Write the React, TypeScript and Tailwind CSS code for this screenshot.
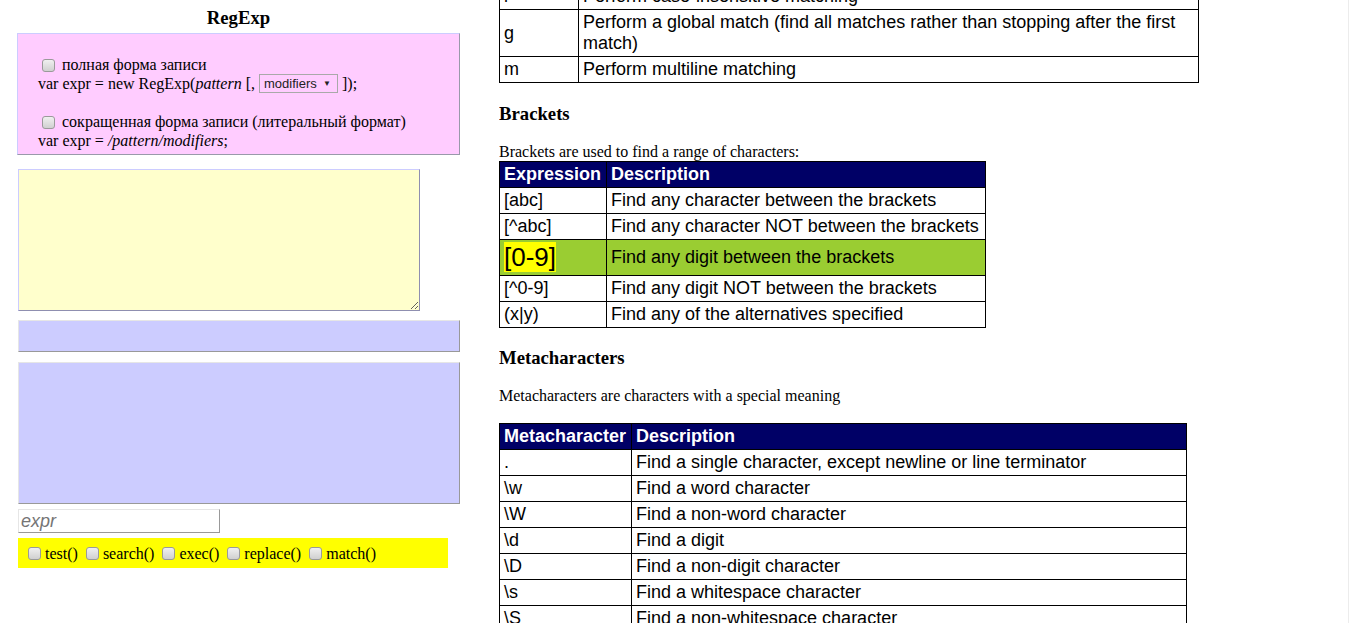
import React from "react";

const cell = "border border-black px-[4px] py-[2px] leading-[21px] align-middle text-left font-normal";
const head = "border border-black px-[4px] py-[2px] leading-[21px] align-middle text-left bg-[#000066] text-white font-bold";

function Box() {
  return (
    <input
      type="checkbox"
      className="appearance-none inline-block w-[13px] h-[13px] rounded-[3px] border border-[#9a9a9a] bg-gradient-to-b from-[#f0f0f0] to-[#d0d0d0] align-[-2px] shrink-0"
    />
  );
}

const meta: [string, string][] = [
  [".", "Find a single character, except newline or line terminator"],
  ["\\w", "Find a word character"],
  ["\\W", "Find a non-word character"],
  ["\\d", "Find a digit"],
  ["\\D", "Find a non-digit character"],
  ["\\s", "Find a whitespace character"],
  ["\\S", "Find a non-whitespace character"],
  ["\\b", "Find a match at the beginning/end of a word"],
  ["\\B", "Find a match not at the beginning/end of a word"],
];

export default function App() {
  return (
    <div className="w-[1349px] h-[623px] overflow-hidden bg-white flex text-black text-[16px] font-['Liberation_Serif',serif] border-r border-[#ececec]">
      {/* left column */}
      <div className="w-[499px] shrink-0 pl-[17px]">
        <h1 className="w-[443px] h-[33px] pt-[7px] text-center font-bold text-[18.72px] leading-[22px]">RegExp</h1>
        <div className="w-[443px] h-[122px] bg-[#ffccff] border border-t-[#ccccff] border-l-[#ccccff] border-b-[#9999aa] border-r-[#9999aa] pl-[20px] pt-[21px] leading-[19px]">
          <div className="h-[19px]">
            <span className="ml-[4px] mr-[7px]"><Box /></span>
            полная форма записи
          </div>
          <div className="h-[19px] flex items-center whitespace-pre">
            <span>var expr = new RegExp(</span>
            <i>pattern</i>
            <span> [, </span>
            <span className="inline-flex items-center justify-between w-[79px] h-[19px] border border-[#a9a9a9] pl-[4px] pr-[6px] font-['Liberation_Sans',sans-serif] text-[13px] text-[#222]">
              <span>modifiers</span>
              <span className="text-[8px]">▼</span>
            </span>
            <span> ]);</span>
          </div>
          <div className="h-[19px]" />
          <div className="h-[19px]">
            <span className="ml-[4px] mr-[7px]"><Box /></span>
            сокращенная форма записи (литеральный формат)
          </div>
          <div className="h-[19px]">
            var expr = <i>/pattern/modifiers</i>;
          </div>
        </div>
        <textarea className="block ml-px mt-[14px] w-[402px] h-[142px] bg-[#ffffcc] border border-t-[#ccccff] border-l-[#ccccff] border-b-[#8f8fb0] border-r-[#8f8fb0] outline-none" />
        <div className="ml-px mt-[9px] w-[442px] h-[32px] bg-[#ccccff] border border-t-[#e6e6e6] border-l-[#e6e6e6] border-b-[#999999] border-r-[#999999]" />
        <div className="ml-px mt-[10px] w-[442px] h-[142px] bg-[#ccccff] border border-t-[#e6e6e6] border-l-[#e6e6e6] border-b-[#999999] border-r-[#999999]" />
        <input
          type="text"
          placeholder="expr"
          className="block ml-px mt-[5px] w-[202px] h-[24px] px-[2px] bg-white border border-t-[#e6e6e6] border-l-[#e6e6e6] border-b-[#999999] border-r-[#999999] italic text-[18px] font-['Liberation_Sans',sans-serif] placeholder:text-[#757575] outline-none"
        />
        <div className="ml-px mt-[5px] w-[430px] h-[30px] bg-[#ffff00] flex items-center pl-[10px] gap-[8px] leading-[19px]">
          {["test()", "search()", "exec()", "replace()", "match()"].map((t) => (
            <span key={t} className="flex items-center">
              <span className="mr-[4px] flex"><Box /></span>
              {t}
            </span>
          ))}
        </div>
      </div>

      {/* right column */}
      <div className="flex-1 h-[623px] overflow-hidden font-['Liberation_Sans',sans-serif] text-[18px]">
        <div className="-mt-[17px]">
          <table className="border-collapse w-[700px]">
            <tbody>
              <tr>
                <td className={`${cell} w-[79px]`}>i</td>
                <td className={cell}>Perform case-insensitive matching</td>
              </tr>
              <tr>
                <td className={`${cell} w-[79px]`}>g</td>
                <td className={cell}>Perform a global match (find all matches rather than stopping after the first match)</td>
              </tr>
              <tr>
                <td className={`${cell} w-[79px]`}>m</td>
                <td className={cell}>Perform multiline matching</td>
              </tr>
            </tbody>
          </table>

          <h3 className="mt-[20px] font-['Liberation_Serif',serif] font-bold text-[18.72px] leading-[22px]">Brackets</h3>
          <p className="mt-[18px] font-['Liberation_Serif',serif] text-[16px] leading-[18px]">Brackets are used to find a range of characters:</p>
          <table className="border-collapse w-[487px]">
            <thead>
              <tr>
                <th className={`${head} w-[107px]`}>Expression</th>
                <th className={head}>Description</th>
              </tr>
            </thead>
            <tbody>
              <tr>
                <td className={cell}>[abc]</td>
                <td className={cell}>Find any character between the brackets</td>
              </tr>
              <tr>
                <td className={cell}>[^abc]</td>
                <td className={cell}>Find any character NOT between the brackets</td>
              </tr>
              <tr className="bg-[#9acd32]">
                <td className="border border-black px-[4px] pt-[2px] pb-[2px] leading-[31px] align-middle text-left">
                  <span className="inline-block align-top bg-[#ffff00] text-[26px] leading-[30px]">[0-9]</span>
                </td>
                <td className={cell}>Find any digit between the brackets</td>
              </tr>
              <tr>
                <td className={cell}>[^0-9]</td>
                <td className={cell}>Find any digit NOT between the brackets</td>
              </tr>
              <tr>
                <td className={cell}>(x|y)</td>
                <td className={cell}>Find any of the alternatives specified</td>
              </tr>
            </tbody>
          </table>

          <h3 className="mt-[19px] font-['Liberation_Serif',serif] font-bold text-[18.72px] leading-[22px]">Metacharacters</h3>
          <p className="mt-[18px] font-['Liberation_Serif',serif] text-[16px] leading-[18px]">Metacharacters are characters with a special meaning</p>
          <table className="mt-[18px] border-collapse w-[688px]">
            <thead>
              <tr>
                <th className={`${head} w-[132px]`}>Metacharacter</th>
                <th className={head}>Description</th>
              </tr>
            </thead>
            <tbody>
              {meta.map(([k, d]) => (
                <tr key={k}>
                  <td className={cell}>{k}</td>
                  <td className={cell}>{d}</td>
                </tr>
              ))}
            </tbody>
          </table>
        </div>
      </div>
    </div>
  );
}
